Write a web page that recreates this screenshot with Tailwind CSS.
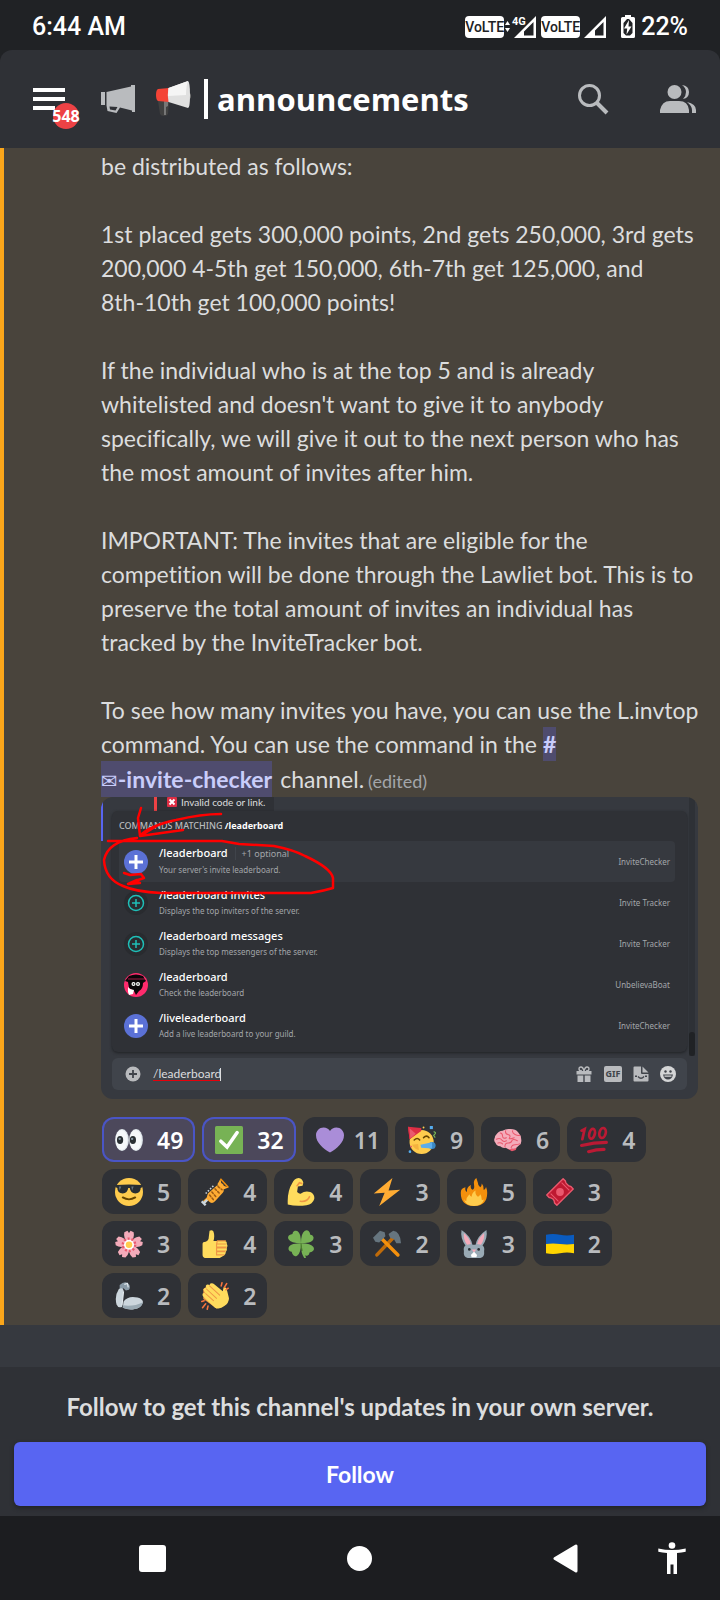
<!DOCTYPE html>
<html lang="en">
<head>
    <meta charset="UTF-8">
    <meta name="viewport" content="width=device-width, initial-scale=1.0">
    <title>announcements</title>
    <script src="https://cdn.jsdelivr.net/npm/@tailwindcss/browser@4"></script>
</head>
<body class="bg-[#202225] min-h-screen flex flex-col font-['Lato','Noto_Sans',sans-serif] [font-variant-ligatures:none] text-[#dcddde]">

    <!-- Status bar -->
    <div class="h-[50px] pt-1 pl-8 pr-8 flex items-center justify-between font-['Roboto',sans-serif] font-medium text-[25px] text-white">
        <span>6:44 AM</span>
        <div class="flex items-center">
            <span class="w-[39px] h-[22px] rounded bg-white text-[#202225] text-[14px] leading-[22px] text-center">VoLTE</span>
            <svg class="w-[33px] h-[24px]" viewBox="0 0 33 24" fill="#fff">
                <path d="M1 10l2.500-4L6 10zM1 13h5l-2.500 4z"/>
                <path d="M32 1v22H10zM29.500 7L20 16.500V20.500h9.500z" fill-rule="evenodd"/>
                <text x="8" y="10" font-size="11" font-weight="700" stroke="#202225" stroke-width="2" paint-order="stroke">4G</text>
            </svg>
            <span class="ml-1 w-[39px] h-[22px] rounded bg-white text-[#202225] text-[14px] leading-[22px] text-center">VoLTE</span>
            <svg class="ml-1 w-[22px] h-[24px]" viewBox="0 0 22 24" fill="#fff">
                <path d="M22 1v22H0zM19.500 7L11 15.500V20.500h8.500z" fill-rule="evenodd"/>
            </svg>
            <svg class="ml-[15px] w-[14px] h-[24px]" viewBox="0 0 14 24">
                <path d="M4 0h6v2h2.500q1.500 0 1.500 1.500v18q0 1.500-1.500 1.500h-11q-1.500 0-1.500-1.500v-18Q0 2 1.500 2H4z" fill="#fff"/>
                <path d="M6 4L2.500 8v10L5 20.500h4l2.500-2.500V8L8 4z" fill="#202225"/>
                <path d="M8 5l-5 8.500h3.200L5.500 19.500l5-8H7.500z" fill="#fff"/>
            </svg>
            <span class="ml-[6px]">22%</span>
        </div>
    </div>

    <!-- Channel header -->
    <header class="h-[98px] bg-[#2f3136] rounded-t-xl pl-8 pr-6 flex items-center">
        <button class="relative w-9 h-9" aria-label="Menu">
            <svg class="w-9 h-9" viewBox="0 0 36 36" fill="#fff"><path d="M1 7h32v4H1zM1 16h32v4H1zM1 25h22v4H1z"/></svg>
            <span class="absolute left-[21px] top-[22px] w-[26px] h-[26px] rounded-full bg-[#ed4245] flex items-center justify-center font-['Open_Sans',sans-serif] font-bold text-[16px] text-white">548</span>
        </button>
        <svg class="ml-[33px] w-[34px] h-[28px]" viewBox="0 0 34 28" fill="#b9bbbe">
            <path d="M0 7h4v13H0zM5.500 7L30 1.500V0h4v27h-3v-1.500L19 22.500 15.500 28 6.500 26l-1-5.500zM8.500 21.500l.5 3 5.500 1 2-3.500z" fill-rule="evenodd"/>
        </svg>
        <svg class="ml-5 w-9 h-9" viewBox="0 0 36 36">
            <path d="M3 20h9l2 1-1 12q-1 2-4 2t-4-2z" fill="#414141"/>
            <path d="M9 20h4v5l-2 1v8H9z" fill="#777"/>
            <path d="M3 8l11-1v14l-11-1q-2-1-2-6t2-6z" fill="#f44336"/>
            <path d="M33 11q3 1 3 4t-3 4z" fill="#757575"/>
            <path d="M13.500 7L33 0q2 1 2 14t-2 13l-19.500-6q-1.500-7 0-14z" fill="#e0e0e0"/>
            <path d="M13.500 7L33 0q-2 5-2 14l-18 1z" fill="#f5f5f5"/>
        </svg>
        <span class="ml-[13px] w-1 h-10 bg-white"></span>
        <h1 class="ml-[9px] font-['Open_Sans',sans-serif] font-bold text-[31px] text-white">announcements</h1>
        <button class="ml-auto w-8 h-8" aria-label="Search">
            <svg class="w-8 h-8" viewBox="0 0 32 32" fill="none" stroke="#b9bbbe"><circle cx="12.500" cy="12.500" r="10" stroke-width="3"/><path d="M20 20l10 10" stroke-width="4"/></svg>
        </button>
        <button class="ml-[51px] w-9 h-7" aria-label="Members">
            <svg class="w-9 h-7" viewBox="0 0 36 28" fill="#b9bbbe">
                <circle cx="14.500" cy="7" r="7"/>
                <path d="M0 28v-3q2-9 10-9h9q9 0 10 9v3zM22 0q7 1 7 7t-6 7q3-3 3-7t-4-7zM27 17q9 2 9 8v3h-4v-3q0-4-5-8z"/>
            </svg>
        </button>
    </header>

    <!-- Mentioned message -->
    <main class="bg-[#49443c] border-l-4 border-[#faa61a] pt-px pl-[97px] pr-5 pb-[7px] text-[23px] leading-[34px]">
        <p class="mb-[34px]">be distributed as follows:</p>
        <p class="mb-[34px] whitespace-nowrap">1st placed gets 300,000 points, 2nd gets 250,000, 3rd gets<br>200,000 4-5th get 150,000, 6th-7th get 125,000, and<br>8th-10th get 100,000 points!</p>
        <p class="mb-[34px]">If the individual who is at the top 5 and is already<br>whitelisted and doesn't want to give it to anybody<br>specifically, we will give it out to the next person who has<br>the most amount of invites after him.</p>
        <p class="mb-[34px] whitespace-nowrap">IMPORTANT: The invites that are eligible for the<br>competition will be done through the Lawliet bot. This is to<br>preserve the total amount of invites an individual has<br>tracked by the InviteTracker bot.</p>
        <p class="whitespace-nowrap">To see how many invites you have, you can use the L.invtop<br>command. You can use the command in the <a href="#" class="inline-block bg-[#4f4c6e] text-[#c9cdfb] font-bold">#</a></p>
        <p class="flex items-baseline leading-9"><a href="#" class="bg-[#4f4c6e] text-[#c9cdfb] font-bold"><span class="font-['DejaVu_Sans'] font-normal text-[20px] leading-none">✉</span>-invite-checker</a><span class="ml-2">channel.</span><span class="ml-1 text-[18px] leading-none text-[#a3a6aa]">(edited)</span></p>

        <!-- Attachment -->
        <figure class="relative mr-[2px] overflow-hidden rounded-xl h-[302px] bg-[#36393f] font-['Noto_Sans',sans-serif] text-white flex">
            <span class="w-[2px] h-11 bg-[#5865f2]"></span>
            <div class="flex-1 ml-[9px] flex flex-col">
                <div class="h-[14px] flex text-[10px] leading-[10px] text-[#dcddde]">
                    <div class="ml-[42px] pl-[10px] w-[120px] border-l-[3px] border-[#ed4245] bg-[#2f3136] flex gap-1 whitespace-nowrap font-['Lato',sans-serif]">
                        <svg class="w-[10px] h-[10px]" viewBox="0 0 10 10"><rect width="10" height="10" rx="1" fill="#dd2e44"/><path d="M2.500 2.500l5 5m0-5l-5 5" stroke="#fff" stroke-width="2"/></svg>
                        <span>Invalid code or link.</span>
                    </div>
                </div>
                <div class="h-[241px] rounded-md bg-[#2f3136] px-[7px] shadow-[0_1px_3px_#202225]">
                    <p class="h-[30px] text-[9px] leading-[30px] font-medium text-[#b9bbbe]">COMMANDS MATCHING <span class="font-bold text-white">/leaderboard</span></p>
                    <ul class="text-[8px] leading-[14px] text-[#a3a6aa] mr-[5px]">
                        <li class="h-[41px] px-[5px] flex items-center rounded-sm bg-[#36393f]">
                            <svg class="w-6 h-6" viewBox="0 0 24 24"><circle cx="12" cy="12" r="12" fill="#5b71d6"/><path d="M12 5v14M5 12h14" stroke="#fff" stroke-width="3"/></svg>
                            <div class="ml-[11px] pb-[2px]"><p class="font-['Noto_Sans',sans-serif] text-[11px] leading-[18px] font-medium text-white">/leaderboard <span class="ml-1 pl-[6px] border-l border-[#40444b] text-[9px] font-normal text-[#a3a6aa]">+1 optional</span></p><p>Your server's invite leaderboard.</p></div>
                            <span class="ml-auto">InviteChecker</span>
                        </li>
                        <li class="h-[41px] px-[5px] flex items-center">
                            <svg class="w-6 h-6" viewBox="0 0 24 24" fill="none" stroke="#1fbfb8" stroke-width="1.500"><circle cx="12" cy="12" r="12" fill="#292b2f" stroke="none"/><circle cx="12" cy="12" r="7.500"/><path d="M12 8v8M8 12h8"/></svg>
                            <div class="ml-[11px] pb-[2px]"><p class="text-[11px] leading-[18px] font-medium text-white">/leaderboard invites</p><p>Displays the top inviters of the server.</p></div>
                            <span class="ml-auto">Invite Tracker</span>
                        </li>
                        <li class="h-[41px] px-[5px] flex items-center">
                            <svg class="w-6 h-6" viewBox="0 0 24 24" fill="none" stroke="#1fbfb8" stroke-width="1.500"><circle cx="12" cy="12" r="12" fill="#292b2f" stroke="none"/><circle cx="12" cy="12" r="7.500"/><path d="M12 8v8M8 12h8"/></svg>
                            <div class="ml-[11px] pb-[2px]"><p class="text-[11px] leading-[18px] font-medium text-white">/leaderboard messages</p><p>Displays the top messengers of the server.</p></div>
                            <span class="ml-auto">Invite Tracker</span>
                        </li>
                        <li class="h-[41px] px-[5px] flex items-center">
                            <svg class="w-6 h-6" viewBox="0 0 24 24"><circle cx="12" cy="12" r="12" fill="#ff2b6d"/><path d="M5 3q7-3 14 0l3 5-3 2q0 6-4 8l-3 4-2-4-5-3-1-6-3-1z" fill="#0b0609"/><path d="M4 6h17" stroke="#ff2b6d" stroke-width=".6"/><circle cx="9.500" cy="11" r="2" fill="#fff"/><circle cx="14" cy="11" r="2" fill="#fff"/><circle cx="9.500" cy="11" r=".8"/><circle cx="14" cy="11" r=".8"/><path d="M4 14l2 2 4 1-1 4-4 1-1-3z" fill="#fff"/></svg>
                            <div class="ml-[11px] pb-[2px]"><p class="text-[11px] leading-[18px] font-medium text-white">/leaderboard</p><p>Check the leaderboard</p></div>
                            <span class="ml-auto">UnbelievaBoat</span>
                        </li>
                        <li class="h-[41px] px-[5px] flex items-center">
                            <svg class="w-6 h-6" viewBox="0 0 24 24"><circle cx="12" cy="12" r="12" fill="#5b71d6"/><path d="M12 5v14M5 12h14" stroke="#fff" stroke-width="3"/></svg>
                            <div class="ml-[11px] pb-[2px]"><p class="text-[11px] leading-[18px] font-medium text-white">/liveleaderboard</p><p>Add a live leaderboard to your guild.</p></div>
                            <span class="ml-auto">InviteChecker</span>
                        </li>
                    </ul>
                </div>
                <div class="mt-[6px] h-8 rounded-md bg-[#40444b] pl-[13px] pr-[11px] flex items-center">
                    <svg class="w-4 h-4" viewBox="0 0 16 16"><circle cx="8" cy="8" r="7.500" fill="#b9bbbe"/><path d="M8 4v8M4 8h8" stroke="#40444b" stroke-width="1.800"/></svg>
                    <input type="text" value="/leaderboard" aria-label="Message" class="ml-3 w-[67px] font-['Lato',sans-serif] text-[12px] text-[#dcddde] underline decoration-red-600 underline-offset-2 outline-none">
                    <span class="w-px h-[13px] bg-[#dcddde]"></span>
                    <svg class="ml-auto w-4 h-4" viewBox="0 0 16 16" fill="#b9bbbe"><path d="M.5 5h15v3.500H.5zM1.500 9.500h5.800V16H1.500zM8.700 9.500h5.800V16H8.700z"/><path d="M8 5Q7 1 5 1T3 3t3 2M8 5q1-4 3-4t2 2-3 2" fill="none" stroke="#b9bbbe" stroke-width="1.300"/></svg>
                    <span class="ml-3 w-[18px] h-4 rounded-[2px] bg-[#b9bbbe] text-[9px] leading-4 font-bold text-center text-[#40444b]">GIF</span>
                    <svg class="ml-[11px] w-4 h-4" viewBox="0 0 16 16" fill="#b9bbbe"><path d="M1.500.5H8V7q0 1 1 1h6.500v6.500q0 1-1 1h-13q-1 0-1-1v-13q0-1 1-1zM9.500.5L15.500 6.500h-6z"/><path d="M5 10.500q3 3.500 6 0" fill="none" stroke="#40444b" stroke-width="1.300"/><path d="M2 9.500h2v1.500H2zM12 9.500h2v1.500h-2z" fill="#40444b"/></svg>
                    <svg class="ml-[11px] w-4 h-4" viewBox="0 0 16 16"><circle cx="8" cy="8" r="8" fill="#d4d5d6"/><circle cx="5.500" cy="5.500" r="1.200" fill="#40444b"/><circle cx="10.500" cy="5.500" r="1.200" fill="#40444b"/><path d="M3 8.500h10q-1 5-5 5t-5-5z" fill="#40444b"/><path d="M4.500 9.500h7v1.300h-7z" fill="#d4d5d6"/></svg>
                </div>
            </div>
            <div class="ml-[2px] mr-[3px] w-[6px] h-[259px] bg-[#2e3136] flex items-end"><span class="w-full h-6 rounded-full bg-[#202225]"></span></div>
            <svg class="absolute left-0 top-0 w-[240px] h-[110px]" viewBox="0 1 240 110" fill="none" stroke="#f00" stroke-width="2.500" stroke-linecap="round" stroke-linejoin="round">
                <path d="M40 12l-3 10 2 18M120 18q-20 0-45 6-28 6-36 16l43-6M39 40l20-12"/>
                <path d="M7 45h114l17 3 35 2q20 4 31 10 26 12 28 22v10q-10 3-22 5H60q-25-1-38-7Q4 83 3 64 7 45 36 42"/>
                <path d="M23 77l6 2 11-1 3 4-9 3 5 2-12 1 9-4"/>
            </svg>
        </figure>

        <!-- Reactions -->
        <div class="mt-[18px] ml-px mr-2 flex flex-wrap gap-[7px] font-['Noto_Sans',sans-serif] font-semibold text-[#b9bbbe]">
            <button class="h-[45px] pl-[13px] pr-3 rounded-xl flex items-center gap-[14px] bg-[#4c485b] ring-2 ring-inset ring-[#4a55c5] text-white">
                <svg class="w-7 h-7" viewBox="0 0 36 36"><ellipse cx="9" cy="18" rx="8.800" ry="14" fill="#e1e8ed"/><ellipse cx="27" cy="18" rx="8.800" ry="14" fill="#e1e8ed"/><ellipse cx="8.500" cy="18" rx="7.500" ry="13" fill="#f5f8fa"/><ellipse cx="26.500" cy="18" rx="7.500" ry="13" fill="#f5f8fa"/><ellipse cx="6.500" cy="18" rx="4" ry="5" fill="#292f33"/><ellipse cx="23" cy="18" rx="4" ry="5" fill="#292f33"/><circle cx="6" cy="16.500" r="1.500" fill="#8899a6"/><circle cx="22" cy="16.500" r="1.500" fill="#8899a6"/></svg>49
            </button>
            <button class="h-[45px] pl-[13px] pr-3 rounded-xl flex items-center gap-[14px] bg-[#4c485b] ring-2 ring-inset ring-[#4a55c5] text-white">
                <svg class="w-7 h-7" viewBox="0 0 36 36"><rect width="36" height="36" rx="2" fill="#77b255"/><path d="M7.500 19.500l8 7.500L28.500 8.500" fill="none" stroke="#fff" stroke-width="4.500" stroke-linecap="round"/></svg>32
            </button>
            <button class="h-[45px] pl-[13px] pr-2 rounded-xl flex items-center gap-[10px] bg-[#2f3136]">
                <svg class="w-7 h-7" viewBox="0 0 36 36"><path d="M36 11.800C36 6.500 31.700 2 26.200 2 22.700 2 19.700 3.800 18 6.500 16.300 3.800 13.200 2 9.800 2 4.300 2 0 6.500 0 11.800 0 21 9 29 18 34c9-5 18-13 18-22.200z" fill="#aa8dd8"/></svg>11
            </button>
            <button class="h-[45px] pl-[13px] pr-[11px] rounded-xl flex items-center gap-[14px] bg-[#2f3136]">
                <svg class="w-7 h-7" viewBox="0 0 36 36"><circle cx="17.500" cy="20.500" r="15.500" fill="#ffcc4d"/><path d="M0 1l2 16L17 5z" fill="#dd2e44"/><path d="M0 1l17 1.500v4L2 17z" fill="#dd2e44"/><path d="M2 3l1 13 7-6z" fill="#ea596e"/><path d="M8 18q4-4 7 0M20 15q4-4 7 0" fill="none" stroke="#664500" stroke-width="2" stroke-linecap="round"/><circle cx="31" cy="25" r="4.500" fill="#3b88c3"/><path d="M16 24l15-3v8l-14-1z" fill="#5dadec"/><path d="M28 0h4v4h-4z" fill="#55acee"/><path d="M5 24l8-1 1 8q-5-1-9-7z" fill="#f4b23e"/><path d="M33 7l3 2-3 3 2 3" fill="none" stroke="#77b255" stroke-width="1.500"/><circle cx="2.500" cy="33" r="1.700" fill="#55acee"/><circle cx="4" cy="26.500" r="1.200" fill="#ea596e"/><circle cx="20" cy="2" r="1.200" fill="#ffcc4d"/></svg>9
            </button>
            <button class="h-[45px] pl-[13px] pr-[11px] rounded-xl flex items-center gap-[14px] bg-[#2f3136]">
                <svg class="w-7 h-7" viewBox="0 0 36 36"><path d="M17 29l12-1-1 3-5 1.500z" fill="#ea596e"/><path d="M3 11q3-5 8-5 5-3 10-2 7 0 10 4 4 4 4 9 1 6-3 8-4 5-9 4-4 2-8-1-4 1-7-2-5 0-6-4-3-3-1-7 0-2 2-4z" fill="#f4abba"/><path d="M8 9q3 0 3 4t5 2M15 6q-1 4 3 5t2 4 6 0M24 6q-1 3 3 5t6 1M3 17q5-2 7 1t6 1M5 22q4-1 6 1M14 27q0-5 4-5t5-3 7 0M22 28q1-4 5-4t6-1" fill="none" stroke="#ea596e" stroke-width="1.300" stroke-linecap="round"/></svg>6
            </button>
            <button class="h-[45px] pl-[13px] pr-[11px] rounded-xl flex items-center gap-[14px] bg-[#2f3136]">
                <svg class="w-7 h-7" viewBox="0 0 36 36" fill="none" stroke="#bb1a34" stroke-linecap="round"><path d="M2 6l4-2-3 13" stroke-width="3.500"/><ellipse cx="15.500" cy="10" rx="3.500" ry="6.500" transform="rotate(14 15.500 10)" stroke-width="3.500"/><ellipse cx="29" cy="9" rx="4" ry="6.500" transform="rotate(14 29 9)" stroke-width="3.500"/><path d="M2 25q16-4 32-4M11 33q10-3 20-3" stroke-width="4"/></svg>4
            </button>
            <button class="h-[45px] pl-[13px] pr-[11px] rounded-xl flex items-center gap-[14px] bg-[#2f3136]">
                <svg class="w-7 h-7" viewBox="0 0 36 36"><circle cx="18" cy="18" r="18" fill="#ffcc4d"/><path d="M10 25q8 5 16 0" fill="none" stroke="#664500" stroke-width="2.500" stroke-linecap="round"/><path d="M1 9q17-1.500 34 0v3l-2 1q0 7-7 7-6 0-7-7h-2q-1 7-7 7-7 0-7-7l-2-1z" fill="#292f33"/><path d="M5 11h3l-2 5zM21 11h3l-2 5z" fill="#66757f"/></svg>5
            </button>
            <button class="h-[45px] pl-[13px] pr-[11px] rounded-xl flex items-center gap-[14px] bg-[#2f3136]">
                <svg class="w-7 h-7" viewBox="0 0 36 36"><path d="M4 31L28 8" stroke="#ffac33" stroke-width="4"/><path d="M25 1q1 5 1 6l3 3q2 1 7 2-4 2-8 3l-7-7q2-3 4-7z" fill="#ffac33"/><path d="M25 1l10 11" stroke="#f4900c" stroke-width="2"/><path d="M9 20L20 10q3-2 7 2t1 7L18 30q-4 4-8 0t-1-10z" fill="#ffac33"/><path d="M14 18l6 7M18 14l6 6M22 11l5 4M11 22l5 6" stroke="#9d5b13" stroke-width="2" stroke-linecap="round" stroke-dasharray="2.500 2.500"/><path d="M6 20l10-10" stroke="#ccd6dd" stroke-width="2" stroke-dasharray="2 2"/><path d="M1 30l5 5M3 33l5-5" stroke="#ccd6dd" stroke-width="3"/></svg>4
            </button>
            <button class="h-[45px] pl-[13px] pr-[11px] rounded-xl flex items-center gap-[14px] bg-[#2f3136]">
                <svg class="w-7 h-7" viewBox="0 0 36 36"><path d="M15 0q5 1 6 6l-1 4-6 1-1 7q3 3 5 2 5-4 12-2 6 3 5 9-2 7-10 8-13 2-24-1Q0 17 7 6q2-5 8-6z" fill="#ffdc5d"/><path d="M13 10l3-4 3 1M17 30q9 1 12-6" fill="none" stroke="#ef9645" stroke-width="2" stroke-linecap="round"/></svg>4
            </button>
            <button class="h-[45px] pl-[13px] pr-[11px] rounded-xl flex items-center gap-[14px] bg-[#2f3136]">
                <svg class="w-7 h-7" viewBox="0 0 36 36"><path d="M25 0L1 20l14-1L8 36l27-21-15 1z" fill="#ffac33"/></svg>3
            </button>
            <button class="h-[45px] pl-[13px] pr-[11px] rounded-xl flex items-center gap-[14px] bg-[#2f3136]">
                <svg class="w-7 h-7" viewBox="0 0 36 36"><path d="M35 19q0-4-1.500-7.500-1 3-3 4Q31 10 28 7q0 3-2 5-3-2-3-6-1-3-2-6-4 3-3 8 1 7-2 7-3-1-2-6-6 3-5 9-3-1-2-6Q1 13 1 19q0 17 17 17t17-17z" fill="#f4900c"/><path d="M28 28q0-5-2-7-1 3-3 3-4-3-3-8-5 3-5 8-2 0-3-3-4 4-4 9-2-1-3-3 2 9 13 9t13-9q-1 2-3 1z" fill="#ffcc4d"/></svg>5
            </button>
            <button class="h-[45px] pl-[13px] pr-[11px] rounded-xl flex items-center gap-[14px] bg-[#2f3136]">
                <svg class="w-7 h-7" viewBox="0 0 36 36"><path d="M22 1l3 3q0 3 2 4 2 3 5 3l3 3-21 21-3-3q0-3-2-5-3-2-5-2l-3-3z" fill="#be1931" stroke="#ea596e" stroke-width="1.800" stroke-linejoin="round"/><path d="M6 20l10 10M20 6l10 10" stroke="#ea596e" stroke-width="1.300"/><circle cx="18" cy="18" r="5" fill="#ea596e"/></svg>3
            </button>
            <button class="h-[45px] pl-[13px] pr-[11px] rounded-xl flex items-center gap-[14px] bg-[#2f3136]">
                <svg class="w-7 h-7" viewBox="0 0 36 36"><defs><path id="petal" d="M18 19Q10 11 12 3l4-2 2 3 2-3 4 2q2 8-6 16z"/></defs><g fill="#f4abba"><use href="#petal"/><use href="#petal" transform="rotate(72 18 19)"/><use href="#petal" transform="rotate(144 18 19)"/><use href="#petal" transform="rotate(216 18 19)"/><use href="#petal" transform="rotate(288 18 19)"/></g><circle cx="18" cy="19" r="6.500" fill="#fff"/><circle cx="18" cy="19" r="8" fill="none" stroke="#ea596e" stroke-width="3" stroke-dasharray="2.500 2.500"/><circle cx="18" cy="19" r="4.200" fill="#ffcc4d"/></svg>3
            </button>
            <button class="h-[45px] pl-[13px] pr-[11px] rounded-xl flex items-center gap-[14px] bg-[#2f3136]">
                <svg class="w-7 h-7" viewBox="0 0 36 36"><path d="M2 18q0-3 4-3 4-1 4-6l1-8q3-2 5 1 2 6 0 12l15 0q3 1 2 4 2 2 0 5 1 3-1 5 0 4-3 5l-5 3H7q-5 0-5-4z" fill="#ffdc5d"/><path d="M32 18H20v4h13M32 23H20v4h12M31 28H20v4h10M32 14H21l-1 4" fill="none" stroke="#ef9645" stroke-width="1.500" stroke-linejoin="round"/></svg>4
            </button>
            <button class="h-[45px] pl-[13px] pr-[11px] rounded-xl flex items-center gap-[14px] bg-[#2f3136]">
                <svg class="w-7 h-7" viewBox="0 0 36 36"><defs><path id="leaf" d="M18 17Q5 17 2 12q-2-4 2-6l3-1q0-3 3-4 5-1 7 6 1 5 1 10z"/></defs><g fill="#77b255"><use href="#leaf"/><use href="#leaf" transform="rotate(90 18 17)"/><use href="#leaf" transform="rotate(180 18 17)"/><use href="#leaf" transform="rotate(270 18 17)"/></g><path d="M18 17q1 12 5 18" fill="none" stroke="#3e721d" stroke-width="1"/><path d="M20 28q1 4 3 7" fill="none" stroke="#77b255" stroke-width="2.500" stroke-linecap="round"/></svg>3
            </button>
            <button class="h-[45px] pl-[13px] pr-[11px] rounded-xl flex items-center gap-[14px] bg-[#2f3136]">
                <svg class="w-7 h-7" viewBox="0 0 36 36"><path d="M26 10L5 32" stroke="#bf6b0a" stroke-width="4.500" stroke-linecap="round"/><path d="M10 10l22 22" stroke="#f4900c" stroke-width="4.500" stroke-linecap="round"/><path d="M0 10L9 1l6 2 1 5-8 8-5-1z" fill="#66757f"/><path d="M20 5l6-4q9 1 10 16l-6 0-3-5-5-2z" fill="#66757f"/></svg>2
            </button>
            <button class="h-[45px] pl-[13px] pr-[11px] rounded-xl flex items-center gap-[14px] bg-[#2f3136]">
                <svg class="w-7 h-7" viewBox="0 0 36 36"><path d="M2 0q12 8 14 19h4Q22 8 34 0q2 10-5 20 3 2 2 7 1 8-5 9H10q-6-1-5-9-1-5 2-7Q0 10 2 0z" fill="#99aab5"/><path d="M5 4q7 6 9 14l-5 1Q4 12 5 4zM31 4q-7 6-9 14l5 1q5-7 4-15z" fill="#f4abba"/><circle cx="12" cy="25" r="1.700" fill="#292f33"/><circle cx="24" cy="25" r="1.700" fill="#292f33"/><path d="M15 25h6l-3 4z" fill="#f4abba"/><path d="M18 28l4 4-1 3h-6l-1-3z" fill="#fff"/></svg>3
            </button>
            <button class="h-[45px] pl-[13px] pr-[11px] rounded-xl flex items-center gap-[14px] bg-[#2f3136]">
                <svg class="w-7 h-7" viewBox="0 0 36 36"><path d="M0 6q9-2 18 0t18 0v13H0z" fill="#0a5bbf"/><path d="M0 18q9-1 18 0t18 0v12q-9-2-18 0T0 30z" fill="#ffd500"/></svg>2
            </button>
            <button class="h-[45px] pl-[13px] pr-[11px] rounded-xl flex items-center gap-[14px] bg-[#2f3136]">
                <svg class="w-7 h-7" viewBox="0 0 36 36"><path d="M6 4q5-5 10-3 5 4 2 9l-4 1-3-3-5 3z" fill="#8899a6"/><path d="M5 9q5-3 6 2L9 32q-5 2-7-3-3-11 3-20z" fill="#ccd6dd"/><path d="M11 25q6-8 18-5 7 2 7 6-2 8-12 9-7 1-14-2z" fill="#ccd6dd"/><path d="M10 30q14 2 26-4-2 8-12 9-7 1-14-2z" fill="#9aaab4"/><path d="M12 3l4-1 1 5M11 12l-2 18" stroke="#e1e8ed" stroke-width="1.500" fill="none"/></svg>2
            </button>
            <button class="h-[45px] pl-[13px] pr-[11px] rounded-xl flex items-center gap-[14px] bg-[#2f3136]">
                <svg class="w-7 h-7" viewBox="0 0 36 36"><path d="M3 9l5-4 20 10 2 14-10 5L3 22z" fill="#ef9645"/><path d="M2 15q2-2 4 0l-3-5q1-3 4-2l-1-3q2-3 5-1l1-2q3-1 5 1l11 9 1-5q3-1 4 2l3 12q0 6-6 10-6 5-12 2L4 20q-3-3-2-5z" fill="#ffdc5d"/><path d="M6 15l10 9M7 9l13 12M11 5l13 12" stroke="#ef9645" stroke-width="1.300" stroke-linecap="round"/><path d="M26 5l1-4M30 7l3-5M32 10l3-2M1 25l3-1M2 33l4-5M8 35l1-4" stroke="#fa743e" stroke-width="2" stroke-linecap="round"/></svg>2
            </button>
        </div>
    </main>

    <div class="h-[42px] bg-[#36393f]"></div>

    <!-- Follow bar -->
    <footer class="bg-[#2f3136] px-[14px] pt-6 pb-[10px] font-bold text-center">
        <p class="text-[24px] leading-8 mb-[19px]">Follow to get this channel's updates in your own server.</p>
        <button class="w-full h-16 rounded-md bg-[#5865f2] text-[23px] text-white shadow-[0_2px_4px_#202225]">Follow</button>
    </footer>

    <!-- System navigation -->
    <nav class="flex-1 min-h-[84px] bg-[#1c1d20] pl-[139px] pr-[34px] flex items-center">
        <div class="flex-1 flex items-center justify-between">
            <button class="w-[27px] h-[27px] rounded-[3px] bg-white" aria-label="Recent apps"></button>
            <button class="w-[25px] h-[25px] rounded-full bg-white" aria-label="Home"></button>
            <button aria-label="Back"><svg class="w-[25px] h-[29px]" viewBox="0 0 25 29"><path d="M2 14.500L23 2v25z" fill="#fff" stroke="#fff" stroke-width="3" stroke-linejoin="round"/></svg></button>
        </div>
        <button class="ml-20" aria-label="Accessibility"><svg class="w-7 h-8" viewBox="0 0 28 32" fill="#fff"><circle cx="14" cy="3.500" r="3.300"/><path d="M.3 6.500Q14 9.500 27.700 6.500v3.200q-4 1-8.700 1.300v21h-3.500v-9.500h-3V32H9V11Q4.300 10.700.3 9.700z"/></svg></button>
    </nav>
</body>
</html>
